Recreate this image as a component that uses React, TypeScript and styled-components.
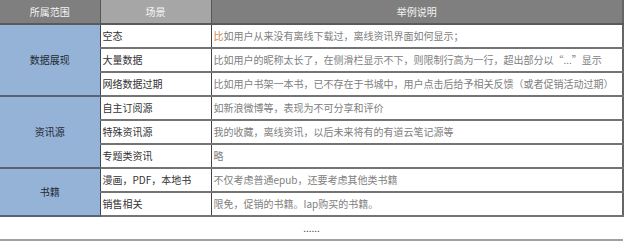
import React from "react"
import styled, { createGlobalStyle } from "styled-components"

const GlobalStyle = createGlobalStyle`
  html, body {
    margin: 0;
    padding: 0;
    background: #ffffff;
  }
  body {
    font-family: "Noto Sans CJK SC", "Microsoft YaHei", sans-serif;
    font-size: 10px;
  }
`

const Table = styled.table`
  width: 624px;
  table-layout: fixed;
  border-collapse: collapse;
  font-size: 10px;
  line-height: 14px;
`

const HeadCell = styled.th<{ $light?: boolean }>`
  height: 23px;
  padding: 0;
  font-weight: normal;
  color: #f4f4f4;
  text-align: center;
  background: ${(p) => (p.$light ? "#a6a6a6" : "#7f7f7f")};
  border-bottom: 2px solid #5a5a5a;
  border-right: 1px solid #555555;
  &:last-child {
    border-right: 2px solid #666666;
  }
`

const GroupCell = styled.td`
  padding: 0;
  text-align: center;
  color: #222a35;
  background: #95b3d7;
  border-right: 1px solid #3d4a5a;
  border-bottom: 2px solid #5a6470;
`

const SceneCell = styled.td`
  height: 22px;
  padding: 0 0 0 2px;
  color: #333333;
  white-space: nowrap;
  border-right: 1px solid #444444;
  border-bottom: 2px solid #747474;
`

const DescCell = styled.td`
  padding: 0 0 0 2px;
  color: #808080;
  white-space: nowrap;
  overflow: hidden;
  border-right: 2px solid #666666;
  border-bottom: 2px solid #747474;
`

const MoreCell = styled.td`
  height: 22px;
  padding: 0;
  text-align: center;
  color: #444444;
  border-top: 2px solid #b0b0b0;
  border-bottom: 2px solid #a0a0a0;
`

const Mark = styled.span`
  color: #d0894e;
`

interface Row {
  scene: string
  desc: React.ReactNode
}

interface Group {
  name: string
  rows: Row[]
}

const groups: Group[] = [
  {
    name: "数据展现",
    rows: [
      {
        scene: "空态",
        desc: (
          <>
            <Mark>比</Mark>如用户从来没有离线下载过，离线资讯界面如何显示；
          </>
        ),
      },
      {
        scene: "大量数据",
        desc: "比如用户的昵称太长了，在侧滑栏显示不下，则限制行高为一行，超出部分以“...”显示",
      },
      {
        scene: "网络数据过期",
        desc: "比如用户书架一本书，已不存在于书城中，用户点击后给予相关反馈（或者促销活动过期）",
      },
    ],
  },
  {
    name: "资讯源",
    rows: [
      { scene: "自主订阅源", desc: "如新浪微博等，表现为不可分享和评价" },
      { scene: "特殊资讯源", desc: "我的收藏，离线资讯，以后未来将有的有道云笔记源等" },
      { scene: "专题类资讯", desc: "略" },
    ],
  },
  {
    name: "书籍",
    rows: [
      { scene: "漫画，PDF，本地书", desc: "不仅考虑普通epub，还要考虑其他类书籍" },
      { scene: "销售相关", desc: "限免，促销的书籍。Iap购买的书籍。" },
    ],
  },
]

const App = () => {
  return (
    <>
      <GlobalStyle />
      <Table>
        <colgroup>
          <col style={{ width: 100 }} />
          <col style={{ width: 111 }} />
          <col />
        </colgroup>
        <thead>
          <tr>
            <HeadCell>所属范围</HeadCell>
            <HeadCell $light>场景</HeadCell>
            <HeadCell>举例说明</HeadCell>
          </tr>
        </thead>
        <tbody>
          {groups.map((g) =>
            g.rows.map((r, i) => (
              <tr key={g.name + i}>
                {i === 0 && <GroupCell rowSpan={g.rows.length}>{g.name}</GroupCell>}
                <SceneCell>{r.scene}</SceneCell>
                <DescCell>{r.desc}</DescCell>
              </tr>
            ))
          )}
          <tr>
            <MoreCell colSpan={3}>......</MoreCell>
          </tr>
        </tbody>
      </Table>
    </>
  )
}

export default App
